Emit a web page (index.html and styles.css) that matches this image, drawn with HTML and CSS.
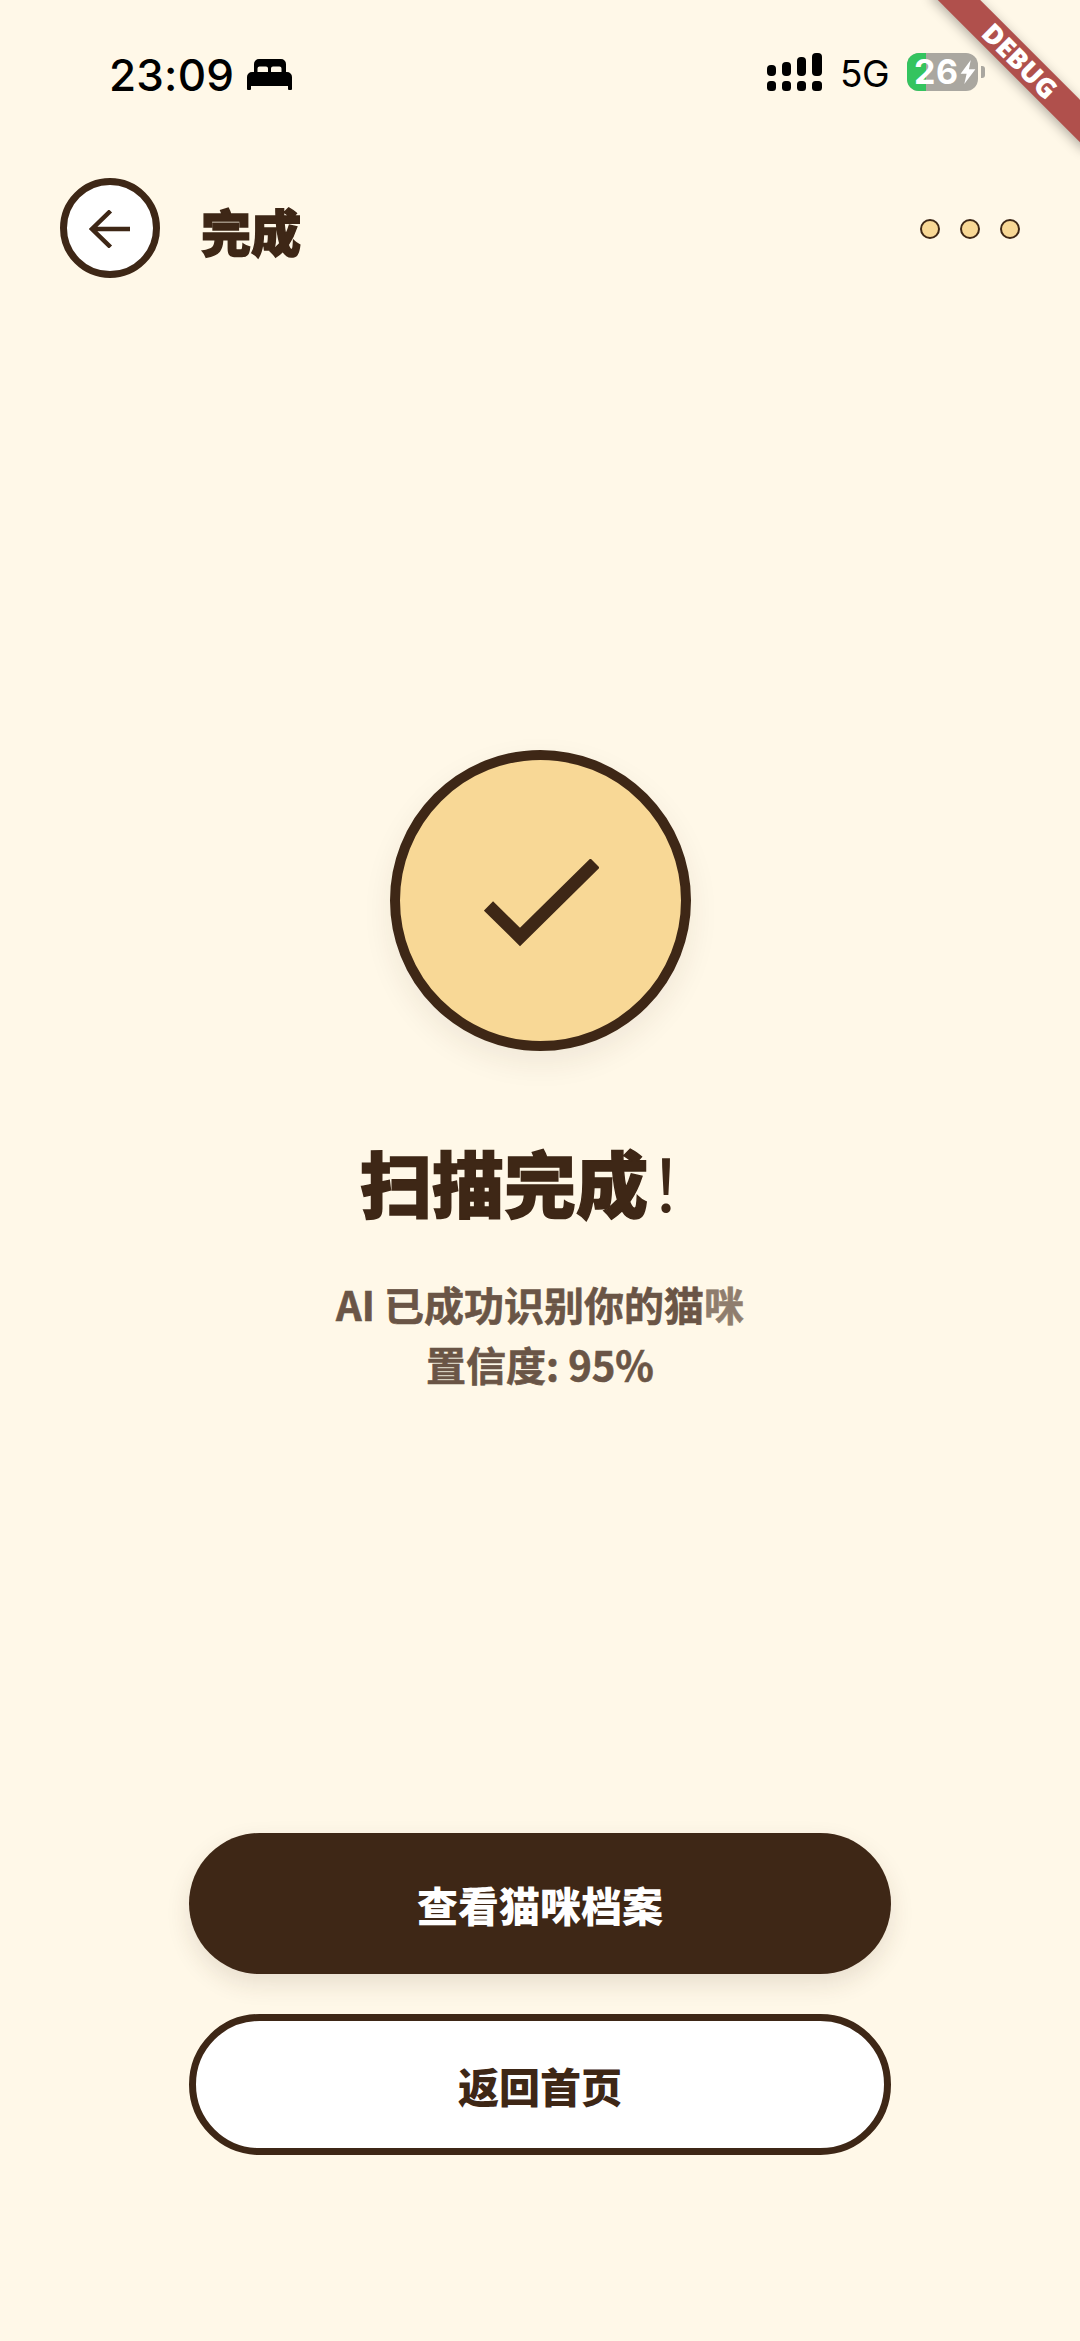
FILE: index.html
```html
<!DOCTYPE html>
<html lang="zh-CN">
<head>
<meta charset="utf-8">
<title>完成</title>
<link rel="stylesheet" href="styles.css">
</head>
<body>
<div class="page">
  <header class="status">
    <div class="status-left">
      <span class="time">23:09</span>
      <svg class="bed" viewBox="0 0 45 31"><path fill-rule="evenodd" d="M12 0h22a5 5 0 0 1 5 5v8h-4.500V9.500a2 2 0 0 0-2-2H26a2 2 0 0 0-2 2V13h-3V9.500a2 2 0 0 0-2-2h-6.500a2 2 0 0 0-2 2V13H7V5a5 5 0 0 1 5-5Z"/><path d="M5 13h35a5 5 0 0 1 5 5v12a1 1 0 0 1-1 1h-2a1 1 0 0 1-1-1v-3H4v3a1 1 0 0 1-1 1H1a1 1 0 0 1-1-1V18a5 5 0 0 1 5-5Z"/></svg>
    </div>
    <div class="status-right">
      <svg class="signal" viewBox="0 0 55 38"><rect x="0" y="12" width="9" height="11" rx="4"/><rect x="15" y="9" width="9" height="14" rx="4"/><rect x="30" y="4" width="9" height="19" rx="4"/><rect x="45" y="0" width="10" height="23" rx="4"/><rect x="0" y="28" width="9" height="10" rx="3.500"/><rect x="15" y="28" width="9" height="10" rx="3.500"/><rect x="30" y="28" width="9" height="10" rx="3.500"/><rect x="45" y="28" width="10" height="10" rx="3.500"/></svg>
      <span class="net">5G</span>
      <div class="battery">
        <div class="battery-body">
          <span class="battery-level"></span>
          <span class="battery-text">26</span>
          <svg class="bolt" viewBox="0 0 16 26"><path d="M11 0 0 15h6.500L4 26 16 10H9Z"/></svg>
        </div>
        <span class="battery-nub"></span>
      </div>
    </div>
  </header>

  <nav class="topbar">
    <button class="back" type="button" aria-label="返回">
      <svg class="back-icon" viewBox="0 0 42 38"><path d="M41 19H3M21.500 1 3 19l18.500 18"/></svg>
    </button>
    <h1 class="page-title">完成</h1>
    <div class="dots"><span class="dot"></span><span class="dot"></span><span class="dot"></span></div>
  </nav>

  <main class="result">
    <div class="badge">
      <svg class="check" viewBox="0 0 115 90"><path d="M4.500 47 36 78 111 4"/></svg>
    </div>
    <h2 class="headline">扫描完成<span class="bang">！</span></h2>
    <p class="sub">AI 已成功识别你的猫<span class="faint">咪</span><br>置信度: 95%</p>
  </main>

  <footer class="actions">
    <button class="btn btn-primary" type="button">查看猫咪档案</button>
    <button class="btn btn-outline" type="button">返回首页</button>
  </footer>

  <div class="debug"><span class="debug-text">DEBUG</span></div>
</div>
</body>
</html>
```
FILE: styles.css
```css
* { box-sizing: border-box; }
html, body { margin: 0; padding: 0; }
body {
  background: #fff8e8;
  color: #3e2716;
  font-family: "Noto Sans CJK SC", "Noto Sans", sans-serif;
}
.page {
  position: relative;
  width: 1080px;
  height: 2341px;
  overflow: hidden;
  display: flex;
  flex-direction: column;
}
.status {
  height: 178px;
  padding: 53px 95px 0 109px;
  display: flex;
  justify-content: space-between;
  align-items: flex-start;
  color: #000;
}
.status-left { display: flex; align-items: flex-start; gap: 13px; padding-top: 6px; }
.time {
  font-family: Inter, "Liberation Sans", sans-serif;
  font-size: 44px;
  font-weight: 500;
  line-height: 32px;
  letter-spacing: 0.2px;
}
.bed { width: 45px; height: 31px; display: block; }
.status-right { display: flex; align-items: flex-start; }
.signal { width: 55px; height: 38px; display: block; }
.net {
  font-family: Inter, "Liberation Sans", sans-serif;
  font-size: 37px;
  line-height: 38px;
  margin: 2px 0 0 18px;
  width: 67px;
  letter-spacing: -0.5px;
}
.battery { display: flex; align-items: center; gap: 3px; }
.battery-body {
  position: relative;
  width: 71px;
  height: 38px;
  border-radius: 12px;
  background: #aaa7a0;
  display: flex;
  align-items: center;
  padding-left: 7px;
  color: #fff;
}
.battery-level {
  position: absolute;
  left: 0;
  top: 0;
  bottom: 0;
  width: 19px;
  background: #34c45f;
  border-radius: 12px 0 0 12px;
}
.battery-text {
  position: relative;
  font-family: Inter, "Liberation Sans", sans-serif;
  font-size: 34px;
  font-weight: 700;
  line-height: 38px;
  letter-spacing: 0.5px;
}
.bolt { position: relative; width: 16px; height: 24px; fill: #fff; margin-left: 1px; }
.battery-nub { width: 4px; height: 12px; border-radius: 0 3px 3px 0; background: #aaa7a0; }

.topbar {
  height: 100px;
  padding: 0 60px;
  display: flex;
  align-items: center;
}
.back {
  width: 100px;
  height: 100px;
  padding: 0;
  border: 7px solid #3e2716;
  border-radius: 50%;
  background: #fff;
  display: flex;
  align-items: center;
  justify-content: center;
}
.back-icon { width: 42px; height: 38px; fill: none; stroke: #3e2716; stroke-width: 4.5; margin-top: 1px; }
.page-title {
  margin: 4px 0 0 41px;
  font-size: 50px;
  font-weight: 900;
  line-height: 60px;
  -webkit-text-stroke: 1.5px #3e2716;
}
.dots { margin-left: auto; display: flex; gap: 20px; padding-top: 1px; }
.dot {
  width: 20px;
  height: 20px;
  border-radius: 50%;
  border: 2.500px solid #3e2716;
  background: #f8d896;
}

.result {
  padding-top: 472px;
  display: flex;
  flex-direction: column;
  align-items: center;
}
.badge {
  width: 301px;
  height: 301px;
  border-radius: 50%;
  border: 10px solid #3e2716;
  background: #f8d896;
  box-shadow: 0 12px 30px rgba(62, 39, 22, 0.08);
  display: flex;
  align-items: center;
  justify-content: center;
}
.check { width: 115px; height: 90px; fill: none; stroke: #3e2716; stroke-width: 13; margin: 6px 0 0 2px; }
.headline {
  margin: 84px 0 0;
  font-size: 72px;
  font-weight: 900;
  line-height: 92px;
  -webkit-text-stroke: 1.5px #3e2716;
}
.bang { font-weight: 400; -webkit-text-stroke: 0; }
.sub {
  margin: 47px 0 0;
  color: #6a5546;
  font-size: 40px;
  font-weight: 700;
  line-height: 60px;
  text-align: center;
  -webkit-text-stroke: 0.6px #6a5546;
}
.faint { opacity: 0.75; }

.actions {
  margin-top: auto;
  padding: 0 189px 186px;
  display: flex;
  flex-direction: column;
  gap: 40px;
}
.btn {
  height: 141px;
  border-radius: 71px;
  font-family: inherit;
  font-size: 41px;
  font-weight: 900;
  display: block;
  width: 100%;
  padding: 0;
}
.btn-primary {
  border: 0;
  background: #3e2716;
  color: #fff;
  box-shadow: 0 10px 24px rgba(62, 39, 22, 0.12);
}
.btn-outline {
  border: 7px solid #3e2716;
  background: #fff;
  color: #3e2716;
}

.debug {
  position: absolute;
  top: 46px;
  left: 910px;
  width: 220px;
  height: 30px;
  background: #b0504c;
  transform: rotate(45deg);
  box-shadow: 0 3px 12px rgba(0, 0, 0, 0.3);
  display: flex;
  align-items: center;
  justify-content: center;
}
.debug-text {
  color: #fff;
  font-family: "Open Sans", "Liberation Sans", sans-serif;
  font-size: 27px;
  font-weight: 800;
  line-height: 30px;
}
```
